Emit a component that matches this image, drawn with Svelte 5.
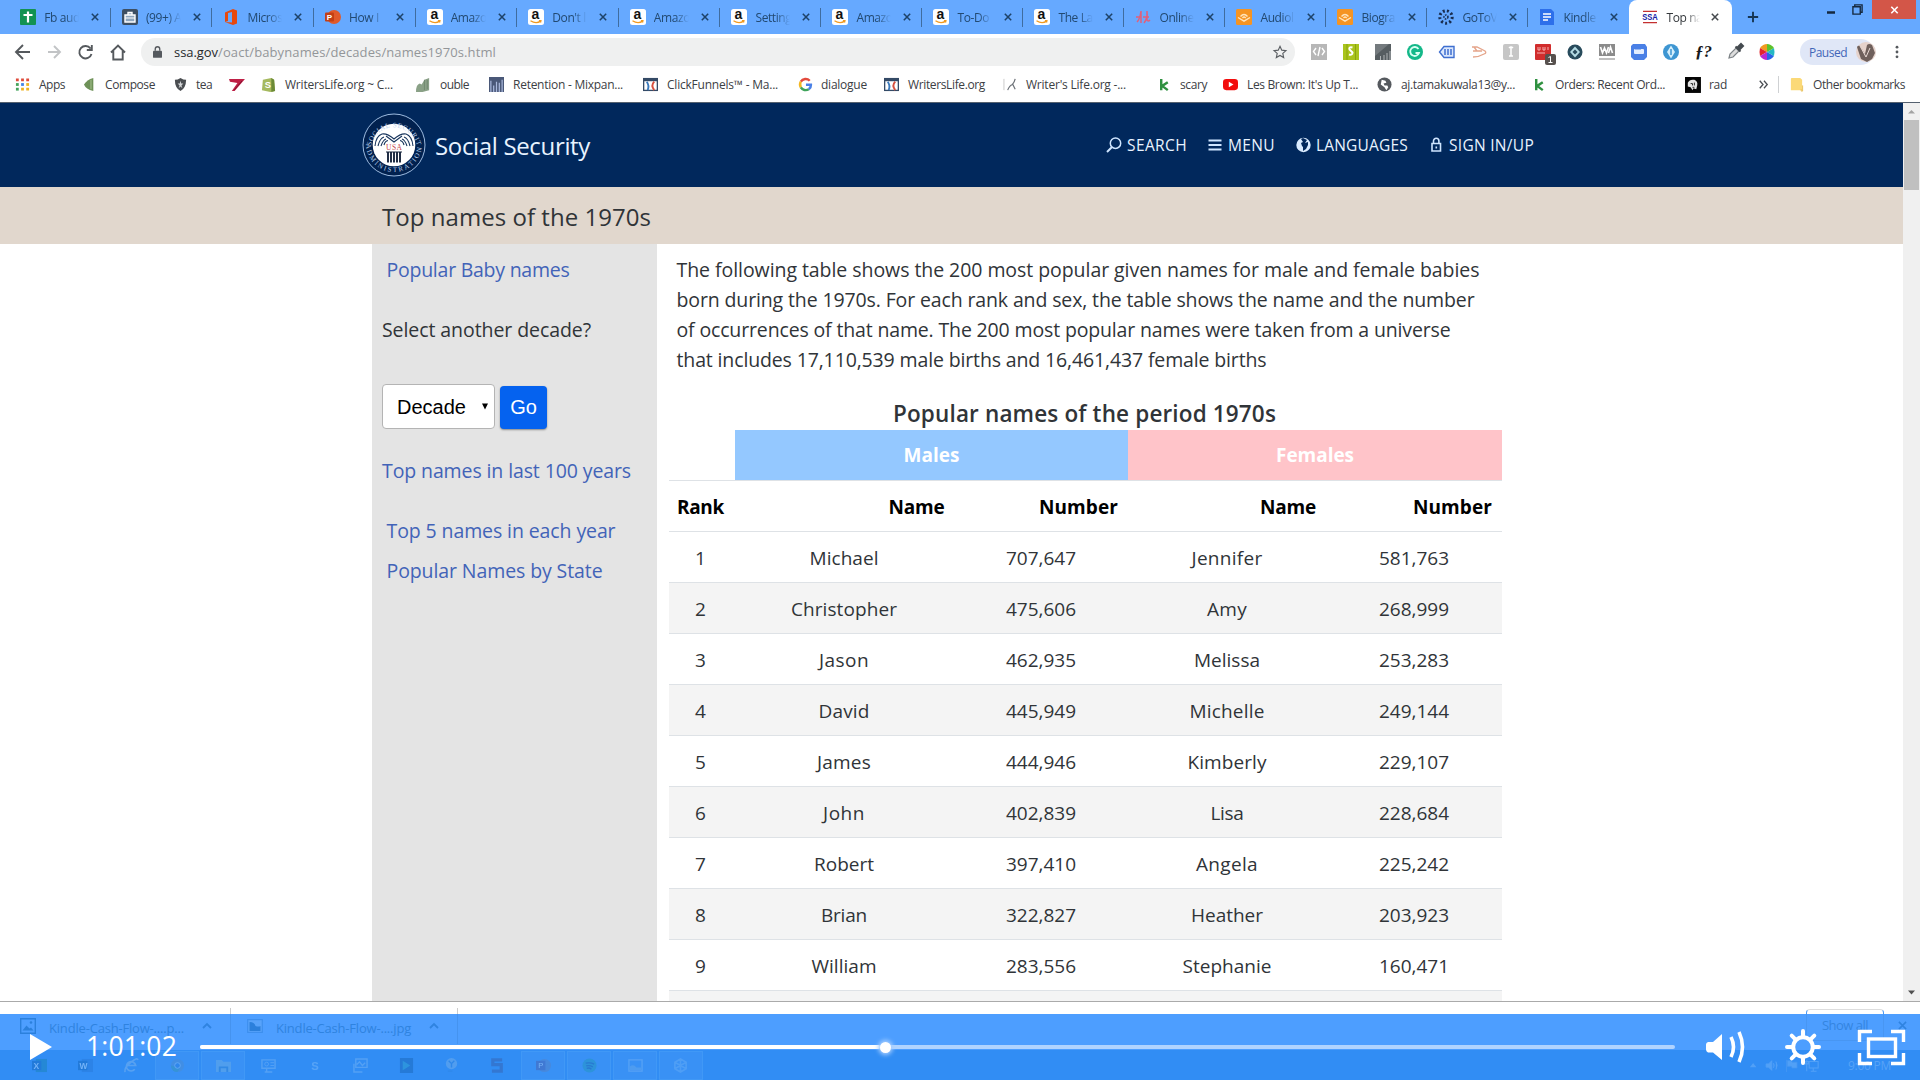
<script>
  // Spreads the letters of a label over a set width, in pixels.
  function fit(node, width) {
    const natural = node.getBoundingClientRect().width;
    const count = [...node.textContent].length;
    if (width && count) node.style.letterSpacing = `${(width - natural) / count}px`;
  }

  const tabs = [
    ['sheet', 'Fb aud'], ['case', '(99+) A'], ['office', 'Micros'], ['ppt', 'How I'],
    ['amazon', 'Amazo'], ['amazon', "Don't l"], ['amazon', 'Amazo'], ['amazon', 'Setting'],
    ['amazon', 'Amazo'], ['amazon', 'To-Do'], ['amazon', 'The La'], ['pulse', 'Online'],
    ['audible', 'Audiol'], ['audible', 'Biogra'], ['goto', 'GoToV'], ['doc', 'Kindle'],
    ['ssa', 'Top na']
  ];

  // icon, left edge, icon-to-text offset, text, text width
  const marks = [
    ['apps', 15, 24, 'Apps', 26], ['leaf', 83, 22, 'Compose', 50], ['shield', 173, 23, 'tea', 16],
    ['seven', 229, 0, '', 0], ['shop', 261, 24, 'WritersLife.org ~ C...', 108],
    ['pear', 416, 24, 'ouble', 29], ['mix', 489, 24, 'Retention - Mixpan...', 110],
    ['funnel', 643, 24, 'ClickFunnels™ - Ma...', 111], ['google', 798, 23, 'dialogue', 46],
    ['funnel', 884, 24, 'WritersLife.org', 77], ['quill', 1003, 23, "Writer's Life.org -...", 100],
    ['kay', 1157, 23, 'scary', 27], ['tube', 1223, 24, "Les Brown: It's Up T...", 111],
    ['globe2', 1377, 24, 'aj.tamakuwala13@y...', 114], ['kay', 1532, 23, 'Orders: Recent Ord...', 110],
    ['rad', 1685, 24, 'rad', 18], ['more', 1756, 0, '', 0], ['folder', 1789, 24, 'Other bookmarks', 92]
  ];
  const markWidth = (i) => (i + 1 < marks.length ? marks[i + 1][1] : 1920) - marks[i][1];

  const extensions = ['code', 'lime', 'chart', 'gram', 'tag', 'curve', 'grey', 'red', 'gem', 'wa', 'bubble', 'drop', 'fn', 'picker', 'wheel'];

  const rows = [
    ['Michael', '707,647', 'Jennifer', '581,763', 69, 71],
    ['Christopher', '475,606', 'Amy', '268,999', 106, 40],
    ['Jason', '462,935', 'Melissa', '253,283', 50, 66],
    ['David', '445,949', 'Michelle', '249,144', 51, 75],
    ['James', '444,946', 'Kimberly', '229,107', 54, 79],
    ['John', '402,839', 'Lisa', '228,684', 42, 33],
    ['Robert', '397,410', 'Angela', '225,242', 60, 62],
    ['Brian', '322,827', 'Heather', '203,923', 46, 72],
    ['William', '283,556', 'Stephanie', '160,471', 65, 89]
  ];

  const tasks = ['xl', 'wd', 'ie', 'chrome', 'files', 'cam', 's', 'mon', 'play', 'y', 'snag', 'pp', 'spot', 'img', 'hex'];
  const openTasks = ['chrome', 'files', 'pp', 'spot', 'img', 'hex'];
</script>

{#snippet label(text, width)}<span class="label" use:fit={width}>{text}</span>{/snippet}

{#snippet icon(name)}
  <svg class="ico" viewBox="0 0 16 16">
    {#if name === 'sheet'}
      <rect width="16" height="16" rx="1" fill="#129252" /><path d="M8 2.5v11M3.5 6h9" stroke="#fff" stroke-width="2.2" />
    {:else if name === 'case'}
      <rect width="16" height="16" rx="2" fill="#3d4f63" /><path d="M3 6h10v7H3zM6 6V3.5h4V6" fill="#8fa6bd" stroke="#fff" stroke-width="1.4" /><path d="M3 9h10" stroke="#fff" />
    {:else if name === 'office'}
      <path d="M2 3.5 10 0l4 1.5v13L10 16l-8-3 7 .6V3L5 4v8l-3 1z" fill="#e8480c" />
    {:else if name === 'ppt'}
      <circle cx="9" cy="8" r="7" fill="#e05a2b" /><rect y="3.5" width="9" height="9" rx="1" fill="#c33f15" /><text x="1.8" y="11" font-size="8" font-weight="700" fill="#fff">P</text>
    {:else if name === 'amazon'}
      <rect width="16" height="16" rx="2.5" fill="#fff" /><text x="3.6" y="10.4" font-size="14" font-weight="700" fill="#111">a</text><path d="M2.5 11.7q5.5 3.6 10 .4m-1.6-.4 2 0-.4 1.8" fill="none" stroke="#f29a1f" stroke-width="1.3" />
    {:else if name === 'pulse'}
      <path d="M2 13q3-3 4-11v12M1 8h5M9 14q4-5 3-12v9q1 2 3 0M8 8h6" fill="none" stroke="#e0607c" stroke-width="1.5" />
    {:else if name === 'audible'}
      <rect width="16" height="16" rx="1.5" fill="#f59423" /><path d="m2 8.5 6 3.7 6-3.7M4.5 7.5Q8 3.5 11.5 7.5M6.5 9Q8 7 9.700 9" fill="none" stroke="#ffe4bd" stroke-width="1.4" />
    {:else if name === 'goto'}
      <circle cx="8" cy="8" r="6.2" fill="none" stroke="#182c4e" stroke-width="3" stroke-dasharray="2 2.2" /><circle cx="8" cy="8" r="2" fill="none" stroke="#182c4e" stroke-width="1.5" stroke-dasharray="1.5 1" />
    {:else if name === 'doc'}
      <path d="M1 0h11l3 3v13H1z" fill="#2d6fea" /><path d="M4 5h8M4 8h8M4 11h5" stroke="#fff" stroke-width="1.5" />
    {:else if name === 'ssa'}
      <path d="M1 2.3h14M1 13.700h14" stroke="#c43030" stroke-width="1.2" /><text x="0.200" y="11" font-size="8.500" font-weight="700" textLength="15.600" lengthAdjust="spacingAndGlyphs" fill="#1722a8">SSA</text>
    {:else if name === 'apps'}
      <g stroke-width="3"><path d="M1 3h3M6.500 3h3M12 3h3" stroke="#df4b3b" /><path d="M1 8h3" stroke="#45a45c" /><path d="M6.500 8h3" stroke="#4285e8" /><path d="M12 8h3" stroke="#eeb323" /><path d="M1 13h3" stroke="#45a45c" /><path d="M6.500 13h8.500" stroke="#eeb323" stroke-dasharray="3 2.500" /></g>
    {:else if name === 'leaf'}
      <path d="M11 1v14Q3 13 1 8q3-5 10-7" fill="#6e9158" /><path d="M8.500 3v10" stroke="#8dab75" stroke-width="2" />
    {:else if name === 'shield'}
      <path d="M8 1q3 2 6 2-.2 9-6 12Q2 12 2 3q3 0 6-2" fill="#4a4d51" /><path d="m8 4 .8 3H11L9 9l1 3-2-2-2 2 1-3-2-2h2.200z" fill="#d5d7d9" />
    {:else if name === 'seven'}
      <path d="M0 2h17L6 15H3l6-8.500L1 5z" fill="#bf2046" /><path d="m14 4-8.500 10" stroke="#7c1230" />
    {:else if name === 'shop'}
      <path d="m2 3 9-2 3 2 1 12-5 1-9-2z" fill="#a5b95e" /><path d="m11 1 3 2 1 12-4 1z" fill="#6c8a36" /><text x="4" y="12" font-size="10" font-weight="700" fill="#fff">S</text>
    {:else if name === 'pear'}
      <path d="M0 16Q0 8 4 7l2 1 3-5 5-2v13l-7 2z" fill="#8aa187" /><path d="M9 3v11M12 3v10" stroke="#70876f" />
    {:else if name === 'mix'}
      <rect width="16" height="16" fill="#4a5878" /><path d="M2 4v12M5 9v7M8 5v11M11 6v10M14 3v13" stroke="#a9b8dc" stroke-width="1.3" />
    {:else if name === 'funnel'}
      <rect x=".7" y="1.700" width="14.600" height="12.600" fill="#fff" stroke="#344a66" stroke-width="1.400" /><path d="M1 3h14" stroke="#344a66" stroke-width="3" /><path d="M4 5q3 4 1 9" stroke="#3a79bd" stroke-width="2" fill="none" /><path d="M12 5q-4 4 0 9" stroke="#d8503f" stroke-width="2" fill="none" />
    {:else if name === 'google'}
      <g fill="none" stroke-width="2.600"><path d="M12.500 4A6 6 0 0 0 3 5" stroke="#e34a3c" /><path d="M3 5a6 6 0 0 0 0 6" stroke="#f3b722" /><path d="M3 11a6 6 0 0 0 8.500 2" stroke="#3ea35a" /><path d="M11.500 13q2.500-2 2.300-4.700H8.500" stroke="#4a80e6" /></g>
    {:else if name === 'quill'}
      <path d="M1 2v12" stroke="#c8c8c8" /><path d="M13 2q-1 4-3 6-3 1-5 6M10 7l3 6" fill="none" stroke="#6c7177" stroke-width="1.300" />
    {:else if name === 'kay'}
      <path d="M4.500 2v12M11.500 5.500l-6 4 6 4.500" fill="none" stroke="#2f9140" stroke-width="2.600" />
    {:else if name === 'tube'}
      <rect y="2" width="16" height="12" rx="3.500" fill="#f20d0d" /><path d="m6.200 5 5 3-5 3z" fill="#fff" />
    {:else if name === 'globe2'}
      <circle cx="8" cy="8" r="7.500" fill="#55595e" /><path d="m5 3 4 1 1 2-3 1 1 2 3 0 1 2-2 3-2-3-4-3z" fill="#fff" />
    {:else if name === 'rad'}
      <rect width="17" height="17" fill="#050505" /><path d="M3 6q2-4 7-3 4 2 3 6l-1 4-3-1-1 2-2-3-3-1z" fill="#e4e4e4" /><path d="M6 7h2v2M10 6v3M8 11l2 0" stroke="#222" fill="none" />
    {:else if name === 'more'}
      <path d="m4 4 3.500 4L4 12m4.500-8L12 8l-3.500 4" fill="none" stroke="#4b4f54" stroke-width="1.400" />
    {:else if name === 'folder'}
      <path d="M2 2q0-1 1-1h9l2 2v11H2z" fill="#fbd977" /><path d="M13 13v2h1.500V9" stroke="#e8be55" fill="none" />
    {/if}
  </svg>
{/snippet}

{#snippet ext(name)}
  <svg class="ext" viewBox="0 0 20 20">
    {#if name === 'code'}
      <rect x="2" y="2" width="16" height="16" fill="#b7b7b7" /><path d="M7 6 4.500 9.500 7 13m6-7 2.500 3.500L13 13m-2-8L9 14" fill="none" stroke="#fff" stroke-width="1.400" />
    {:else if name === 'lime'}
      <rect x="2" y="2" width="16" height="16" fill="#a9c41c" /><path d="M6 2v16M14.500 2v16" stroke="#8ba30f" /><path d="M11.500 5.500q-4-1-3 2l3 3q0 3-3.500 2" stroke="#fff" fill="none" stroke-width="2" />
    {:else if name === 'chart'}
      <rect x="2" y="2" width="16" height="16" fill="#565d61" /><path d="M2 2h14L2 14z" fill="#747a7e" /><path d="M7.500 18v-4M11 18v-5M14 18v-7M17 18V9" stroke="#c6cacc" stroke-width=".8" />
    {:else if name === 'gram'}
      <circle cx="10" cy="10" r="8" fill="#14b889" /><path d="M13.500 7A4.500 4.500 0 1 0 14 11h-3.500" fill="none" stroke="#d8fff2" stroke-width="1.800" />
    {:else if name === 'tag'}
      <path d="M7 4.500h10v11H7L2.500 10z" fill="#dbe7fc" stroke="#3f6fd0" stroke-width="1.400" /><path d="M8 7v6M11 7v6M14 7v6" stroke="#3f6fd0" stroke-width="1.500" />
    {:else if name === 'curve'}
      <path d="M3 5h5l8 4q2 2-1 3-5 3-11 3M4 9l9 0M5 5l3 4" fill="none" stroke="#e5a58b" stroke-width="1.300" />
    {:else if name === 'grey'}
      <rect x="2" y="2" width="16" height="16" rx="2" fill="#c6c6c6" /><path d="M10 5v9M8 6q2-2 4 0M8 14h4" stroke="#fff" stroke-width="1.500" fill="none" />
    {:else if name === 'red'}
      <rect x="2" y="2" width="16" height="16" rx="1" fill="#d12d2d" /><path d="M5 5v3h2V5m3 0v3h2V5m3 0v3M4 11h8" stroke="#f6b2b2" fill="none" /><rect x="12" y="12" width="11" height="11" rx="2" fill="#57514e" /><path d="m15.500 15.500 2-1v6m-2 0h4" stroke="#fff" fill="none" />
    {:else if name === 'gem'}
      <circle cx="10" cy="10" r="7.500" fill="#284b5c" /><path d="m10 4.500 5 5.500-5 5.500-5-5.500z" fill="#b5dce5" /><path d="m10 7.500 2.500 2.500-2.500 2.500L7.500 10z" fill="#284b5c" />
    {:else if name === 'wa'}
      <rect x="2" y="2" width="16" height="12" fill="#8b8b8b" /><path d="m3.500 5 2 6 2-5 2 5 2-6m0 6 2-6 2 6" stroke="#fff" stroke-width="1.600" fill="none" /><path d="M2 17h16" stroke="#aaa" stroke-width="1.500" />
    {:else if name === 'bubble'}
      <path d="M4 2h12l2 3v10l-3 3H5l-3-3V4z" fill="#4a80e6" /><rect x="5" y="7" width="10" height="5" rx="1" fill="#e4eeff" /><path d="M6 7h6" stroke="#4a80e6" />
    {:else if name === 'drop'}
      <circle cx="10" cy="10" r="8" fill="#3e96d2" /><path d="m10 3.500 4 6.500-4 6.500L6 10z" fill="#d5effc" /><path d="M10 7v6" stroke="#3e96d2" stroke-width="1.500" />
    {:else if name === 'fn'}
      <text class="fn" x="2" y="15" font-size="17" fill="#17191b">ƒ?</text>
    {:else if name === 'picker'}
      <path d="m4 16 1-4 6-6 3 3-6 6z" fill="#ddd" stroke="#7c8286" stroke-width="1.200" /><path d="m10.500 4.500 5 5m-3-4 3.500-3.500 2 2L14.500 7.500z" fill="#454b50" stroke="#454b50" stroke-width="2" />
    {:else if name === 'wheel'}
      <path d="M10 10V2Q6 2 3 6z" fill="#f09b20" /><path d="M10 10 3 6q-1 4 0 8z" fill="#e3262d" /><path d="M10 10 3 14q3 4 7 4z" fill="#b92ad0" /><path d="m10 10 7 4q-3 4-7 4z" fill="#2765e8" /><path d="M10 10 17 6q1 4 0 8z" fill="#24b8c4" /><path d="M10 2q4 0 7 4l-7 4z" fill="#5dc22c" />
    {/if}
  </svg>
{/snippet}

<div class="screen">
  <header class="chrome">
    <div class="tabs">
      {#each tabs as [name, title], i}
        <div class="tab" class:early={i < 7} class:active={i === 16} class:last={i >= 15}>
          {@render icon(name)}
          <span class="title">{title}</span>
          <svg class="x" viewBox="0 0 10 10"><path d="m1 1 8 8m0-8L1 9" /></svg>
        </div>
      {/each}
      <svg class="plus" viewBox="0 0 14 14"><path d="M7 1v12M1 7h12" /></svg>
      <div class="window">
        <svg class="min" viewBox="0 0 8 3"><path d="M0 1.500h8" /></svg>
        <svg class="restore" viewBox="0 0 12 12"><path d="M3 3V1h8v8H9M1 3h8v8H1z" /></svg>
        <div class="close"><svg viewBox="0 0 10 10"><path d="m1 1 8 8m0-8L1 9" /></svg></div>
      </div>
    </div>

    <div class="toolbar">
      <svg class="nav" viewBox="0 0 120 20">
        <path d="M15 10H1m7-7-7 7 7 7" />
        <path class="off" d="M33 10h12m-6-6 6 6-6 6" />
        <path d="M75.500 6.500A6.200 6.200 0 1 0 76.500 12M76.800 3v5h-5" />
        <path d="M96 10.500 103 3.500l7 7M98.300 9v8.500h9.400V9" />
      </svg>
      <div class="address">
        <svg class="lock" viewBox="0 0 10 13"><rect y="5" width="10" height="8" rx="1" fill="#55595e" /><path d="M2.500 5V3.200a2.500 2.500 0 0 1 5 0V5" fill="none" stroke="#55595e" stroke-width="1.500" /></svg>
        <span class="url"><span class="host">{@render label('ssa.gov', 44)}</span>{@render label('/oact/babynames/decades/names1970s.html', 278)}</span>
        <svg class="star" viewBox="0 0 16 16"><path d="m8 1.500 2 4.400 4.800.5-3.600 3.200 1 4.700L8 11.900l-4.200 2.400 1-4.700L1.200 6.400 6 5.900z" /></svg>
      </div>
      <div class="exts">{#each extensions as name}{@render ext(name)}{/each}</div>
      <div class="profile">
        {@render label('Paused', 38)}
        <svg viewBox="0 0 20 20"><circle cx="10" cy="10" r="10" fill="#e5d2cb" /><path d="M1 5q1-2 3-1l5 8 2-9q2-2 5 0l3 8-3 6-5 3-6-3z" fill="#6f605c" /><path d="m4 4 6 11 4-9" stroke="#e9dad5" fill="none" /></svg>
      </div>
      <svg class="dots" viewBox="0 0 4 16"><circle cx="2" cy="2.500" r="1.600" /><circle cx="2" cy="8" r="1.600" /><circle cx="2" cy="13.500" r="1.600" /></svg>
    </div>

    <div class="bookmarks">
      {#each marks as [name, x, offset, text, width], i}
        <div class="mark" class:other={name === 'folder'} style:width="{markWidth(i)}px">
          <span class="slot" style:width="{offset || 16}px">{@render icon(name)}</span>
          {#if text}{@render label(text, width)}{/if}
        </div>
      {/each}
    </div>
  </header>

  <div class="viewport">
    <main class="page">
      <div class="banner">
        <svg class="seal" viewBox="0 0 64 64">
          <defs>
            <path id="seal-top" d="M9 33a23.500 23.500 0 0 1 46 0" />
            <path id="seal-bottom" d="M4 31a28 28 0 0 0 56 0" />
          </defs>
          <circle cx="32" cy="32" r="31" fill="#01214f" stroke="#9dbbe0" stroke-width="1" />
          <circle cx="32" cy="32" r="21.300" fill="#fff" />
          <g font-size="7" fill="#bcd3ee" class="serif">
            <text textLength="69"><textPath href="#seal-top">SOCIAL SECURITY</textPath></text>
            <text textLength="84"><textPath href="#seal-bottom">ADMINISTRATION</textPath></text>
          </g>
          <path d="M13 33q1-10 7-12 5-1 12 5 7-6 12-5 6 2 7 12M16 33q2-8 6-9M19 33q2-6 5-7M22 32q1-4 4-4.500M48 33q-2-8-6-9M45 33q-2-6-5-7M42 32q-1-4-4-4.500M24 23l8 6 8-6" fill="none" stroke="#17345c" stroke-width="1.100" />
          <text class="serif" x="24" y="37" font-size="7.500" textLength="16" fill="#c8454d">USA</text>
          <path d="M26 39v10.500M29 39v10.500M32 39v10.500M35 39v10.500M38 39v10.500" stroke="#17243c" stroke-width="1.900" />
          <path d="M24 39h16" stroke="#17243c" stroke-width="1" />
        </svg>
        <div class="brand">{@render label('Social Security', 155)}</div>
        <nav class="menu">
          <span class="entry"><svg viewBox="0 0 16 16"><circle cx="9.500" cy="6.200" r="5.200" fill="none" stroke="#cfe5ff" stroke-width="1.500" /><path d="m6 10-5 5" stroke="#cfe5ff" stroke-width="2" /></svg>{@render label('SEARCH', 60)}</span>
          <span class="entry"><svg viewBox="0 0 16 16"><path d="M1.500 3.500h13M1.500 8h13M1.500 12.500h13" stroke="#cfe5ff" stroke-width="1.800" /></svg>{@render label('MENU', 47)}</span>
          <span class="entry"><svg viewBox="0 0 16 16"><circle cx="8.500" cy="8" r="7.200" fill="#d9ebff" /><path d="m8 1 4 2-2 3 3-1 0 3-2 4-3 2 0-4-1-1-1-3 2-1-2-3z" fill="#01285c" /></svg>{@render label('LANGUAGES', 92)}</span>
          <span class="entry"><svg viewBox="0 0 16 16"><path d="M4 6.500h8.500V14H4zM5.500 6.500V4a2.700 2.700 0 0 1 5.400 0v2.500M8.300 9.500V11.500" fill="none" stroke="#cfe5ff" stroke-width="1.600" /></svg>{@render label('SIGN IN/UP', 85)}</span>
        </nav>
      </div>

      <div class="heading">{@render label('Top names of the 1970s', 269)}</div>

      <div class="columns">
        <aside class="side">
          <a class="in first" href="#names">{@render label('Popular Baby names', 183)}</a>
          <div class="ask">{@render label('Select another decade?', 209)}</div>
          <div class="form">
            <div class="select">{@render label('Decade', 69)}<svg viewBox="0 0 6 7"><path d="M0 .5h6L3 6.500z" /></svg></div>
            <div class="go">Go</div>
          </div>
          <a href="#century">{@render label('Top names in last 100 years', 249)}</a>
          <a class="in five" href="#year">{@render label('Top 5 names in each year', 229)}</a>
          <a class="in" href="#state">{@render label('Popular Names by State', 216)}</a>
        </aside>

        <article class="content">
          <div class="intro">
            <div>{@render label('The following table shows the 200 most popular given names for male and female babies', 803)}</div>
            <div>{@render label('born during the 1970s. For each rank and sex, the table shows the name and the number', 798)}</div>
            <div>{@render label('of occurrences of that name. The 200 most popular names were taken from a universe', 774)}</div>
            <div>{@render label('that includes 17,110,539 male births and 16,461,437 female births', 590)}</div>
          </div>
          <div class="caption">{@render label('Popular names of the period 1970s', 383)}</div>
          <div class="groups">
            <div></div>
            <div class="males">{@render label('Males', 56)}</div>
            <div class="females">{@render label('Females', 78)}</div>
          </div>
          <div class="row head">
            <span>{@render label('Rank', 47)}</span><span>{@render label('Name', 56)}</span><span>{@render label('Number', 79)}</span><span>{@render label('Name', 56)}</span><span>{@render label('Number', 79)}</span>
          </div>
          {#each rows as [male, maleCount, female, femaleCount, mw, fw], i}
            <div class="row" class:alt={i % 2}>
              <span>{i + 1}</span><span>{@render label(male, mw)}</span><span>{@render label(maleCount, 70)}</span><span>{@render label(female, fw)}</span><span>{@render label(femaleCount, 70)}</span>
            </div>
          {/each}
          <div class="row alt"></div>
        </article>
      </div>
    </main>
    <div class="scroll">
      <svg viewBox="0 0 17 17"><path d="M5 10.500 8.500 7l3.500 3.500z" fill="#a3a3a3" /></svg>
      <div class="thumb"></div>
      <svg class="down" viewBox="0 0 17 17"><path d="M5 6.500 8.500 10.500l3.500-4z" fill="#505050" /></svg>
    </div>
  </div>

  <footer class="bottom">
    <div class="gap"></div>
    <div class="shelf">
      <div class="file">
        <svg class="pic" viewBox="0 0 16 16"><path d="M.7.700h14.600v14.600H.7z" fill="none" stroke="#2b80dc" stroke-width="1.400" /><path d="m2.500 12.500 4-5 3 3 1.500-1 2.500 3z" fill="#2b80dc" /><circle cx="11" cy="4.500" r="1.300" fill="#2b80dc" /></svg>
        {@render label('Kindle-Cash-Flow-....p...', 135)}
        <svg class="up" viewBox="0 0 10 6"><path d="m1 5 4-4 4 4" /></svg>
      </div>
      <div class="file">
        <svg class="pic" viewBox="0 0 16 16"><path d="M.7 1.700h14.600v12.600H.7z" fill="#58a3fa" stroke="#3d8fee" stroke-width="1.200" /><path d="M2.500 4q5 0 6 4 3 1 5 0v5h-11z" fill="#2b80dc" /></svg>
        {@render label('Kindle-Cash-Flow-....jpg', 135)}
        <svg class="up" viewBox="0 0 10 6"><path d="m1 5 4-4 4 4" /></svg>
      </div>
      <div class="all">{@render label('Show all', 46)}</div>
      <svg class="dismiss" viewBox="0 0 10 10"><path d="m1 1 8 8m0-8L1 9" /></svg>
    </div>
    <div class="taskbar">
      {#each tasks as name}
        <div class="task" class:open={openTasks.includes(name)}>
          <svg viewBox="0 0 16 16">
            {#if name === 'xl' || name === 'wd'}
              <rect x="4" y="1" width="12" height="14" fill={name === 'xl' ? '#2187c9' : '#2a80e2'} /><rect y="3" width="10" height="10" fill="#1c72cf" /><text x="1.500" y="11.500" font-size="9" font-weight="700" fill="#8fc3fa">{name === 'xl' ? 'X' : 'W'}</text>
            {:else if name === 'ie'}
              <path d="M3 8h9.500A5 5 0 1 0 11.500 12M1 15Q0 10 8 4q6-5 7-2" fill="none" stroke="#68aaf1" stroke-width="1.700" />
            {:else if name === 'chrome'}
              <circle cx="8" cy="8" r="7" fill="#458ede" /><path d="M1 8a7 7 0 0 0 7 7l3-5z" fill="#3594c9" /><circle cx="8" cy="8" r="3" fill="#2c83e8" stroke="#73b2f5" />
            {:else if name === 'files'}
              <path d="M0 2h6l2 2h8v11H0z" fill="#5ba4ea" /><path d="M4 15v-5h8v5" fill="none" stroke="#2f86df" stroke-width="2" />
            {:else if name === 'cam'}
              <path d="M1 2h14v9H1zM6 11v3M4 15h8" fill="none" stroke="#62a9f5" stroke-width="1.500" /><circle cx="6" cy="6.500" r="2" fill="none" stroke="#62a9f5" /><path d="M10 5h4M10 8h4" stroke="#62a9f5" />
            {:else if name === 's'}
              <text x="4.500" y="12.500" font-size="12" font-weight="700" fill="#66adf8">S</text>
            {:else if name === 'mon'}
              <path d="M3 1h12v9H3zM1 6v9h9M4 7l3-3 3 4 3-3" fill="none" stroke="#62a9f5" stroke-width="1.500" />
            {:else if name === 'play'}
              <rect x="1" width="14" height="16" fill="#2173cb" /><path d="m4 3 8 5-8 5z" fill="#2c98d6" />
            {:else if name === 'y'}
              <circle cx="8" cy="6" r="6" fill="#5fa5ee" /><path d="m5 3 3 3 3-3M8 6v4M4 14h5" stroke="#2e86e6" stroke-width="1.500" fill="none" />
            {:else if name === 'snag'}
              <path d="M13 2H3v5h9v7H2" fill="none" stroke="#356fc4" stroke-width="3.500" />
            {:else if name === 'pp'}
              <circle cx="9" cy="8" r="7" fill="#4d86d4" /><rect y="3" width="10" height="10" fill="#436fc6" /><text x="2.500" y="11" font-size="8" fill="#95c5f9">P</text>
            {:else if name === 'spot'}
              <circle cx="8" cy="8" r="7.500" fill="#2895cf" /><path d="M4 5.500q5-1 9 1M4.500 8.500q4-1 7 1M5 11q3-1 5 1" stroke="#2270c4" stroke-width="1.400" fill="none" />
            {:else if name === 'img'}
              <rect x="1" y="2" width="14" height="12" fill="none" stroke="#62a9f5" stroke-width="1.400" /><path d="M2 9q4-3 7 1h5v3H2z" fill="#58a1ee" />
            {:else}
              <path d="m8 1 6 3.500v7L8 15l-6-3.500v-7zM8 1v14M2 4.500l12 7M14 4.500l-12 7" fill="none" stroke="#58a4f6" stroke-width="1.700" />
            {/if}
          </svg>
        </div>
      {/each}
      <div class="tray">
        <svg viewBox="0 0 84 16">
          <path d="m0 10 4-5 4 5z" fill="#5aa5f7" />
          <path d="M20 6h3l4-4v12l-4-4h-3zM29 5q2 3 0 6M32 3q3 5 0 10" fill="#5aa5f7" stroke="#5aa5f7" />
          <path d="M45 1v15M46 2h5l1 2h6v7h-6l-1-2h-5z" fill="#5aa5f7" stroke="#4b9af1" />
          <path d="M73 3h11v8H73zM78 11v4M75 15h7M70 1v6M68 3h4v3h-4zM70 6v9" fill="none" stroke="#5aa5f7" stroke-width="1.300" />
        </svg>
        {@render label('9:00 PM', 43)}
      </div>
    </div>
  </footer>

  <div class="player">
    <svg class="play" viewBox="0 0 22 26"><path d="M0 0 22 13 0 26z" /></svg>
    <div class="time">{@render label('1:01:02', 91)}</div>
    <div class="track"><div class="played"></div><div class="knob"></div></div>
    <svg class="volume" viewBox="0 0 38 32">
      <path d="M2 11h5l9-8v26l-9-7.500H2q-2-1-2-3v-5q0-2 2-2.500z" fill="#fff" />
      <path d="M25 6q5 10 0 20M33 1q7 15 0 30" fill="none" stroke="#fff" stroke-width="3.600" />
    </svg>
    <svg class="gear" viewBox="0 0 36 36">
      <circle cx="18" cy="18" r="9.800" fill="none" stroke="#fff" stroke-width="4" />
      <path d="M18 2v5M18 29v5M2 18h5M29 18h5M6.700 6.700l3.500 3.500M25.800 25.800l3.500 3.500M29.300 6.700l-3.500 3.500M10.200 25.800l-3.500 3.500" stroke="#fff" stroke-width="4" stroke-linecap="round" />
    </svg>
    <svg class="full" viewBox="0 0 47 35">
      <path d="M1.500 12V1.500H14M33 1.500h12.500V12M45.500 23v10.500H33M14 33.500H1.500V23" fill="none" stroke="#fff" stroke-width="3.400" />
      <rect x="10.500" y="9" width="27" height="17.500" fill="none" stroke="#fff" stroke-width="3.400" />
    </svg>
  </div>
</div>

<style>
  :global(body) { margin: 0; overflow: hidden; }
  .screen { position: relative; width: 1920px; height: 1080px; display: flex; flex-direction: column; overflow: hidden; background: #fff; font-family: "Open Sans", "Noto Sans", sans-serif; color: #303438; }
  .label { display: inline-block; white-space: nowrap; }
  svg { display: block; flex: none; overflow: visible; }
  svg text { font-family: "Liberation Sans", sans-serif; }
  svg .serif, .serif text { font-family: "Liberation Serif", serif; }
  svg text.fn { font-family: "Liberation Serif", serif; font-style: italic; font-weight: 700; }

  .chrome { height: 102px; display: flex; flex-direction: column; background: #fff; }
  .tabs { height: 34px; display: flex; align-items: stretch; padding-left: 9.300px; background: #66a9ff; }
  .tab { flex: none; width: 101px; box-sizing: border-box; display: flex; align-items: center; padding-left: 11px; position: relative; }
  .tab.early { width: 101.600px; }
  .tab:not(.last)::after { content: ""; position: absolute; right: 0; top: 8px; width: 1px; height: 19px; background: #3f6c9f; }
  .tab.active { background: #fff; border-radius: 8px 8px 0 0; width: 103px; padding-left: 13px; }
  .ico { width: 16px; height: 16px; }
  .title { width: 35px; margin: 0 12px 0 8px; font-size: 12px; letter-spacing: -0.400px; white-space: nowrap; overflow: hidden; color: #224971; mask-image: linear-gradient(90deg, #000 60%, transparent); }
  .active .title { width: 34px; margin-right: 11px; color: #33373b; }
  .x { width: 8px; height: 8px; stroke: #1d4268; stroke-width: 1.900; }
  .active .x { stroke: #45494d; }
  .plus { width: 12px; height: 12px; stroke: #163553; stroke-width: 2.200; align-self: center; margin-left: 15px; }
  .window { margin-left: auto; display: flex; align-items: flex-start; margin-right: 4px; fill: none; stroke: #15293f; stroke-width: 1.500; }
  .min { width: 8px; height: 3px; margin: 10.500px 17px 0 0; stroke-width: 2.500; }
  .restore { width: 11px; height: 11px; margin: 4px 9px 0 0; }
  .close { width: 44px; height: 19px; background: #d35648; display: flex; align-items: center; justify-content: center; }
  .close svg { width: 9px; height: 8px; stroke: #fff; stroke-width: 2; }

  .toolbar { height: 36px; display: flex; align-items: center; padding-left: 15px; }
  .nav { width: 120px; height: 20px; fill: none; stroke: #55595d; stroke-width: 1.900; }
  .nav .off { stroke: #c2c4c6; }
  .address { margin-left: 6px; width: 1154px; height: 28px; border-radius: 14px; background: #eff0f0; display: flex; align-items: center; box-sizing: border-box; padding: 0 8px 0 12px; }
  .lock { width: 9px; height: 12px; }
  .url { margin-left: 12px; font-size: 13px; color: #939699; white-space: nowrap; }
  .host { color: #26292c; }
  .star { width: 14px; height: 14px; margin-left: auto; fill: none; stroke: #5b5f63; stroke-width: 1.300; }
  .exts { display: flex; gap: 12px; margin-left: 14px; }
  .ext { width: 20px; height: 20px; }
  .profile { margin-left: 23px; width: 74px; height: 26px; border-radius: 13px; background: #e0e7f7; display: flex; align-items: center; gap: 9px; padding-left: 9px; box-sizing: border-box; color: #4366b8; font-size: 12px; }
  .profile svg { width: 20px; height: 20px; }
  .dots { width: 4px; height: 14px; margin-left: 21px; fill: #55595d; }
  .bookmarks { height: 28px; display: flex; align-items: center; padding-left: 15px; font-size: 12px; color: #3c4044; }
  .mark { flex: none; display: flex; align-items: center; }
  .slot { flex: none; }
  .slot .ico { width: 15px; height: 15px; }
  .other { position: relative; }
  .other::before { content: ""; position: absolute; left: -11px; top: 0; width: 1px; height: 17px; background: #cfd1d3; }

  .viewport { height: 899px; display: flex; border-top: 1px solid #55616f; box-sizing: border-box; overflow: hidden; }
  .page { width: 1903px; display: flex; flex-direction: column; }
  .banner { height: 84px; flex: none; background: #01285c; display: flex; align-items: center; padding-left: 362px; color: #e8f3ff; }
  .seal { width: 64px; height: 64px; }
  .brand { margin-left: 9px; font-size: 24px; line-height: 32px; width: 155px; padding-top: 2px; }
  .menu { margin-left: 516px; display: flex; font-size: 15.500px; }
  .entry { display: flex; align-items: center; gap: 5px; margin-right: 20px; }
  .entry svg { width: 16px; height: 16px; }
  .heading { height: 57px; flex: none; box-sizing: border-box; padding: 14px 0 0 382px; background: #e1d7cd; font-size: 24px; line-height: 32px; }
  .columns { flex: 1; display: flex; padding-left: 372px; overflow: hidden; }
  .side { width: 285px; box-sizing: border-box; background: #e4e4e4; padding: 11px 0 0 10px; display: flex; flex-direction: column; align-items: flex-start; font-size: 19.500px; line-height: 30px; }
  .side a { color: #4263b8; text-decoration: none; height: 30px; }
  .side .in { margin-left: 4.500px; }
  .ask { margin-top: 30px; height: 30px; }
  .form { display: flex; gap: 5px; align-items: center; margin: 39px 0 27px; }
  .select { width: 113px; height: 45px; box-sizing: border-box; border: 1px solid #b4b4b4; border-radius: 4px; background: #fff; display: flex; align-items: center; padding-left: 14px; font-family: "Liberation Sans", sans-serif; font-size: 20px; color: #000; gap: 16px; }
  .select svg { width: 6px; height: 7px; }
  .go { width: 47px; height: 43px; margin-top: 1px; border-radius: 4px; background: #0562ef; color: #fff; display: flex; align-items: center; justify-content: center; font-family: "Liberation Sans", sans-serif; font-size: 20px; box-shadow: 0 1px 2px #888; }
  .side .five { margin: 30px 0 10px 4.500px; }
  .content { margin-left: 12px; width: 833px; padding-top: 11px; }
  .intro { padding-left: 7.500px; font-size: 19.500px; line-height: 30px; height: 120px; }
  .caption { height: 55px; box-sizing: border-box; padding-top: 24px; text-align: center; font-size: 22.500px; line-height: 30px; font-weight: 600; padding-right: 2px; }
  .groups, .row { display: grid; box-sizing: border-box; text-align: center; align-items: center; }
  .groups { grid-template: 50px / 66px 393px 374px; height: 50px; align-items: stretch; line-height: 51px; font-size: 19px; font-weight: 700; color: #fff; }
  .males { background: #94c8ff; }
  .females { background: #ffc4c9; }
  .row { grid-template-columns: 63px 224px 172px 198px 176px; height: 51px; padding-top: 2px; border-top: 1px solid #dee2e6; font-size: 19px; }
  .row.alt { background: #f4f4f4; }
  .row > span:nth-child(3) { padding-right: 2px; }
  .head { font-weight: 700; color: #000; text-align: right; }
  .head span:first-child { text-align: center; }
  .head > span:nth-child(2) { padding-right: 11.500px; }
  .head > span:nth-child(n + 3) { padding-right: 10px; }
  .scroll { width: 17px; background: #f0f0f0; display: flex; flex-direction: column; }
  .scroll svg { width: 17px; height: 17px; }
  .thumb { height: 70px; margin: 0 1px; background: #c0c0c0; }
  .scroll .down { margin-top: auto; }

  .bottom { flex: 1; border-top: 1px solid #aaa; display: flex; flex-direction: column; }
  .gap { height: 12px; background: #fff; }
  .shelf { height: 36px; background: #4d9eff; display: flex; color: #2f83e0; font-size: 13px; }
  .file { width: 227px; height: 36px; margin-top: -6px; padding: 6px 0 0 20px; box-sizing: border-box; display: flex; align-items: center; background: linear-gradient(#ccc 6px, #4593ef 6px) right / 1px 100% no-repeat; }
  .file:first-child { width: 231px; }
  .file + .file { padding-left: 16px; }
  .pic { width: 16px; height: 16px; margin: -6px 13px 0 0; }
  .file .label { margin-top: -2px; }
  .up { width: 10px; height: 6px; margin: -6px 0 0 18px; fill: none; stroke: #2f83e0; stroke-width: 1.800; }
  .all { margin: -5px 0 0 auto; width: 78px; height: 32px; box-sizing: border-box; border: 1px solid #4896f2; border-top-color: #ddd; border-radius: 4px; line-height: 30px; text-align: center; color: #3485df; }
  .dismiss { width: 9px; height: 9px; margin: 7px 13px 0 14px; stroke: #2f83e0; stroke-width: 1.700; }
  .taskbar { flex: 1; background: #318df4; display: flex; align-items: center; padding-left: 17px; }
  .task { width: 42px; height: 27px; margin: 0 1.900px; display: flex; align-items: center; justify-content: center; }
  .task.open { background: #3991f5; outline: 1px solid #4098f6; }
  .task svg { width: 15px; height: 15px; opacity: 0.700; }
  .tray { margin: 0 29px 0 auto; display: flex; align-items: center; gap: 22px; font-size: 12px; color: #57a3f7; }
  .tray svg { width: 84px; height: 13px; opacity: 0.800; }

  /* video controls lying over the recorded screen */
  .player { position: absolute; left: 0; right: 0; bottom: 0; height: 66px; display: flex; align-items: center; padding: 0 15px 0 30px; color: #fff; }
  .play { width: 22px; height: 26px; fill: #fff; }
  .time { width: 112px; margin: -2px 0 0 34px; font-size: 26.500px; line-height: 30px; }
  .track { width: 1475px; height: 4px; margin-left: 2px; border-radius: 2px; background: #b0d3ff; display: flex; align-items: center; }
  .played { width: 680px; height: 4px; background: #fff; border-radius: 2px; }
  .knob { width: 11px; height: 11px; border-radius: 50%; background: #fff; box-shadow: 0 0 4px 2px #a6ceff; }
  .volume { width: 38px; height: 32px; margin-left: 31px; }
  .gear { width: 36px; height: 36px; margin-left: 41px; }
  .full { width: 47px; height: 35px; margin-left: 37px; }
</style>
